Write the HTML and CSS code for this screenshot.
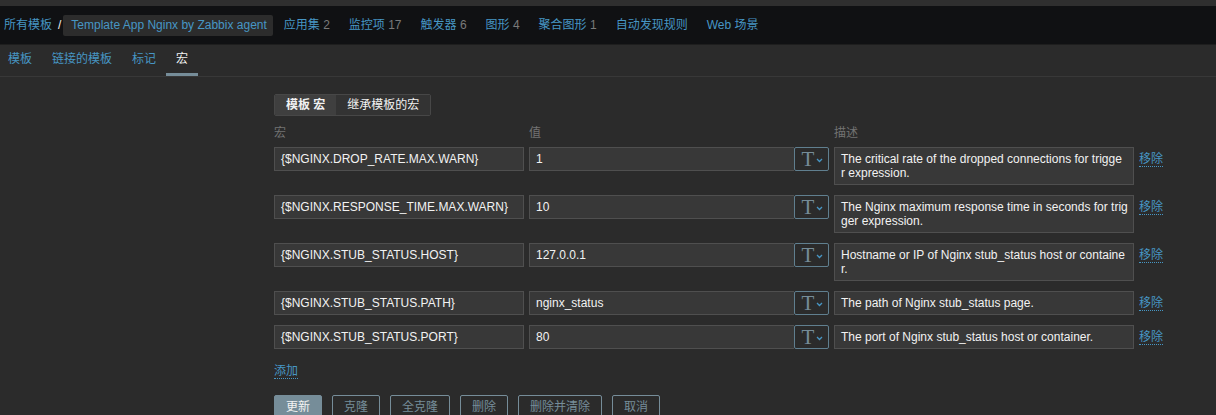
FILE: index.html
```html
<!DOCTYPE html>
<html lang="zh">
<head>
<meta charset="utf-8">
<link rel="stylesheet" href="styles.css">
</head>
<body>
<div class="topstrip"></div>
<nav class="navbar">
  <a class="nav-link crumb">所有模板</a>
  <span class="slash">/</span>
  <span class="tag">Template App Nginx by Zabbix agent</span>
  <a class="nav-link">应用集 <span class="num">2</span></a>
  <a class="nav-link">监控项 <span class="num">17</span></a>
  <a class="nav-link">触发器 <span class="num">6</span></a>
  <a class="nav-link">图形 <span class="num">4</span></a>
  <a class="nav-link">聚合图形 <span class="num">1</span></a>
  <a class="nav-link">自动发现规则</a>
  <a class="nav-link">Web 场景</a>
</nav>
<div class="tabs">
  <a class="tab">模板</a>
  <a class="tab">链接的模板</a>
  <a class="tab">标记</a>
  <a class="tab active">宏</a>
</div>
<main class="content">
  <div class="segmented">
    <span class="seg on">模板 宏</span>
    <span class="seg">继承模板的宏</span>
  </div>
  <div class="grid head">
    <span>宏</span><span>值</span><span>描述</span><span></span>
  </div>
  <div class="grid row">
    <div class="input">{$NGINX.DROP_RATE.MAX.WARN}</div>
    <div class="valwrap"><div class="input val">1</div><div class="tbtn"><span class="tglyph">T</span><svg class="chev" width="7" height="5" viewBox="0 0 7 5"><polyline points="1,1 3.5,3.5 6,1" fill="none" stroke="#4796c4" stroke-width="1.3"/></svg></div></div>
    <div class="desc">The critical rate of the dropped connections for trigge<br>r expression.</div>
    <a class="link">移除</a>
  </div>
  <div class="grid row">
    <div class="input">{$NGINX.RESPONSE_TIME.MAX.WARN}</div>
    <div class="valwrap"><div class="input val">10</div><div class="tbtn"><span class="tglyph">T</span><svg class="chev" width="7" height="5" viewBox="0 0 7 5"><polyline points="1,1 3.5,3.5 6,1" fill="none" stroke="#4796c4" stroke-width="1.3"/></svg></div></div>
    <div class="desc">The Nginx maximum response time in seconds for trig<br>ger expression.</div>
    <a class="link">移除</a>
  </div>
  <div class="grid row">
    <div class="input">{$NGINX.STUB_STATUS.HOST}</div>
    <div class="valwrap"><div class="input val">127.0.0.1</div><div class="tbtn"><span class="tglyph">T</span><svg class="chev" width="7" height="5" viewBox="0 0 7 5"><polyline points="1,1 3.5,3.5 6,1" fill="none" stroke="#4796c4" stroke-width="1.3"/></svg></div></div>
    <div class="desc">Hostname or IP of Nginx stub_status host or containe<br>r.</div>
    <a class="link">移除</a>
  </div>
  <div class="grid row">
    <div class="input">{$NGINX.STUB_STATUS.PATH}</div>
    <div class="valwrap"><div class="input val">nginx_status</div><div class="tbtn"><span class="tglyph">T</span><svg class="chev" width="7" height="5" viewBox="0 0 7 5"><polyline points="1,1 3.5,3.5 6,1" fill="none" stroke="#4796c4" stroke-width="1.3"/></svg></div></div>
    <div class="desc">The path of Nginx stub_status page.</div>
    <a class="link">移除</a>
  </div>
  <div class="grid row">
    <div class="input">{$NGINX.STUB_STATUS.PORT}</div>
    <div class="valwrap"><div class="input val">80</div><div class="tbtn"><span class="tglyph">T</span><svg class="chev" width="7" height="5" viewBox="0 0 7 5"><polyline points="1,1 3.5,3.5 6,1" fill="none" stroke="#4796c4" stroke-width="1.3"/></svg></div></div>
    <div class="desc">The port of Nginx stub_status host or container.</div>
    <a class="link">移除</a>
  </div>
  <div class="addrow"><a class="link">添加</a></div>
  <div class="buttons">
    <button class="btn primary">更新</button>
    <button class="btn">克隆</button>
    <button class="btn">全克隆</button>
    <button class="btn">删除</button>
    <button class="btn">删除并清除</button>
    <button class="btn">取消</button>
  </div>
</main>
</body>
</html>
```

FILE: styles.css
```css
* { box-sizing: border-box; }
html, body {
  margin: 0;
  padding: 0;
  background: #2b2b2b;
  font-family: "Liberation Sans", Arial, "Noto Sans CJK SC", sans-serif;
  font-size: 12px;
  color: #f2f2f2;
  overflow: hidden;
}
.topstrip {
  height: 6px;
  background: #2f2f2f;
}
.navbar {
  height: 39px;
  background: #101113;
  border-bottom: 1px solid #1e1e1e;
  display: flex;
  align-items: center;
  padding-left: 4px;
  white-space: nowrap;
}
.nav-link {
  color: #4796c4;
  margin-right: 19px;
  line-height: 16px;
}
.nav-link.crumb { margin-right: 0; }
.num { color: #7a7a7a; }
.slash {
  color: #f2f2f2;
  margin: 0 2px 0 6px;
}
.tag {
  background: #2c2c2c;
  color: #4796c4;
  height: 21px;
  line-height: 21px;
  padding: 0 6px 0 8px;
  margin-right: 11px;
  border-radius: 2px;
}
.tabs {
  display: flex;
  height: 32px;
  border-bottom: 1px solid #383838;
  margin-left: -2px;
}
.tab {
  color: #4796c4;
  padding: 0 10px;
  line-height: 28px;
  border-bottom: 3px solid transparent;
  height: 31px;
}
.tab.active {
  color: #f2f2f2;
  border-bottom-color: #768d99;
}
.content {
  padding: 17px 0 0 274px;
}
.segmented {
  display: inline-flex;
  border: 1px solid #474747;
  border-radius: 2px;
  height: 22px;
  overflow: hidden;
}
.seg {
  line-height: 20px;
  padding: 0 11px;
  background: #333333;
  color: #f2f2f2;
}
.seg.on {
  background: #3f3f3f;
  font-weight: bold;
}
.grid {
  display: grid;
  grid-template-columns: 250px 300px 300px auto;
  column-gap: 5px;
  align-items: start;
}
.head {
  margin-top: 10px;
  color: #737373;
  line-height: 14px;
  height: 21px;
}
.row { margin-bottom: 10px; }
.input, .desc {
  background: #383838;
  border: 1px solid #4f4f4f;
  color: #f2f2f2;
  padding: 4px 6px;
  line-height: 14px;
  min-height: 24px;
  white-space: nowrap;
  overflow: hidden;
}
.valwrap { display: flex; }
.val { flex: 1; border-right: none; }
.tbtn {
  width: 35px;
  height: 24px;
  border: 1px solid #607f8f;
  border-radius: 2px;
  background: #2b2b2b;
  display: flex;
  align-items: center;
  justify-content: center;
  gap: 2px;
  padding-left: 2px;
}
.tglyph {
  font-family: "Liberation Serif", "DejaVu Serif", serif;
  font-size: 21px;
  color: #768d99;
  line-height: 20px;
}
.chev { margin-top: 2px; }
.link {
  color: #4796c4;
  border-bottom: 1px dotted #4796c4;
  line-height: 14px;
  justify-self: start;
  margin-top: 5px;
}
.addrow {
  margin-top: 3px;
  height: 30px;
}
.addrow .link { display: inline-block; }
.buttons {
  display: flex;
  gap: 10px;
  margin-top: 6px;
}
.btn {
  font: inherit;
  height: 24px;
  padding: 0 11px;
  border: 1px solid #768d99;
  border-radius: 2px;
  background: transparent;
  color: #768d99;
  line-height: 22px;
}
.btn.primary {
  background: #768d99;
  color: #f2f2f2;
}
```
